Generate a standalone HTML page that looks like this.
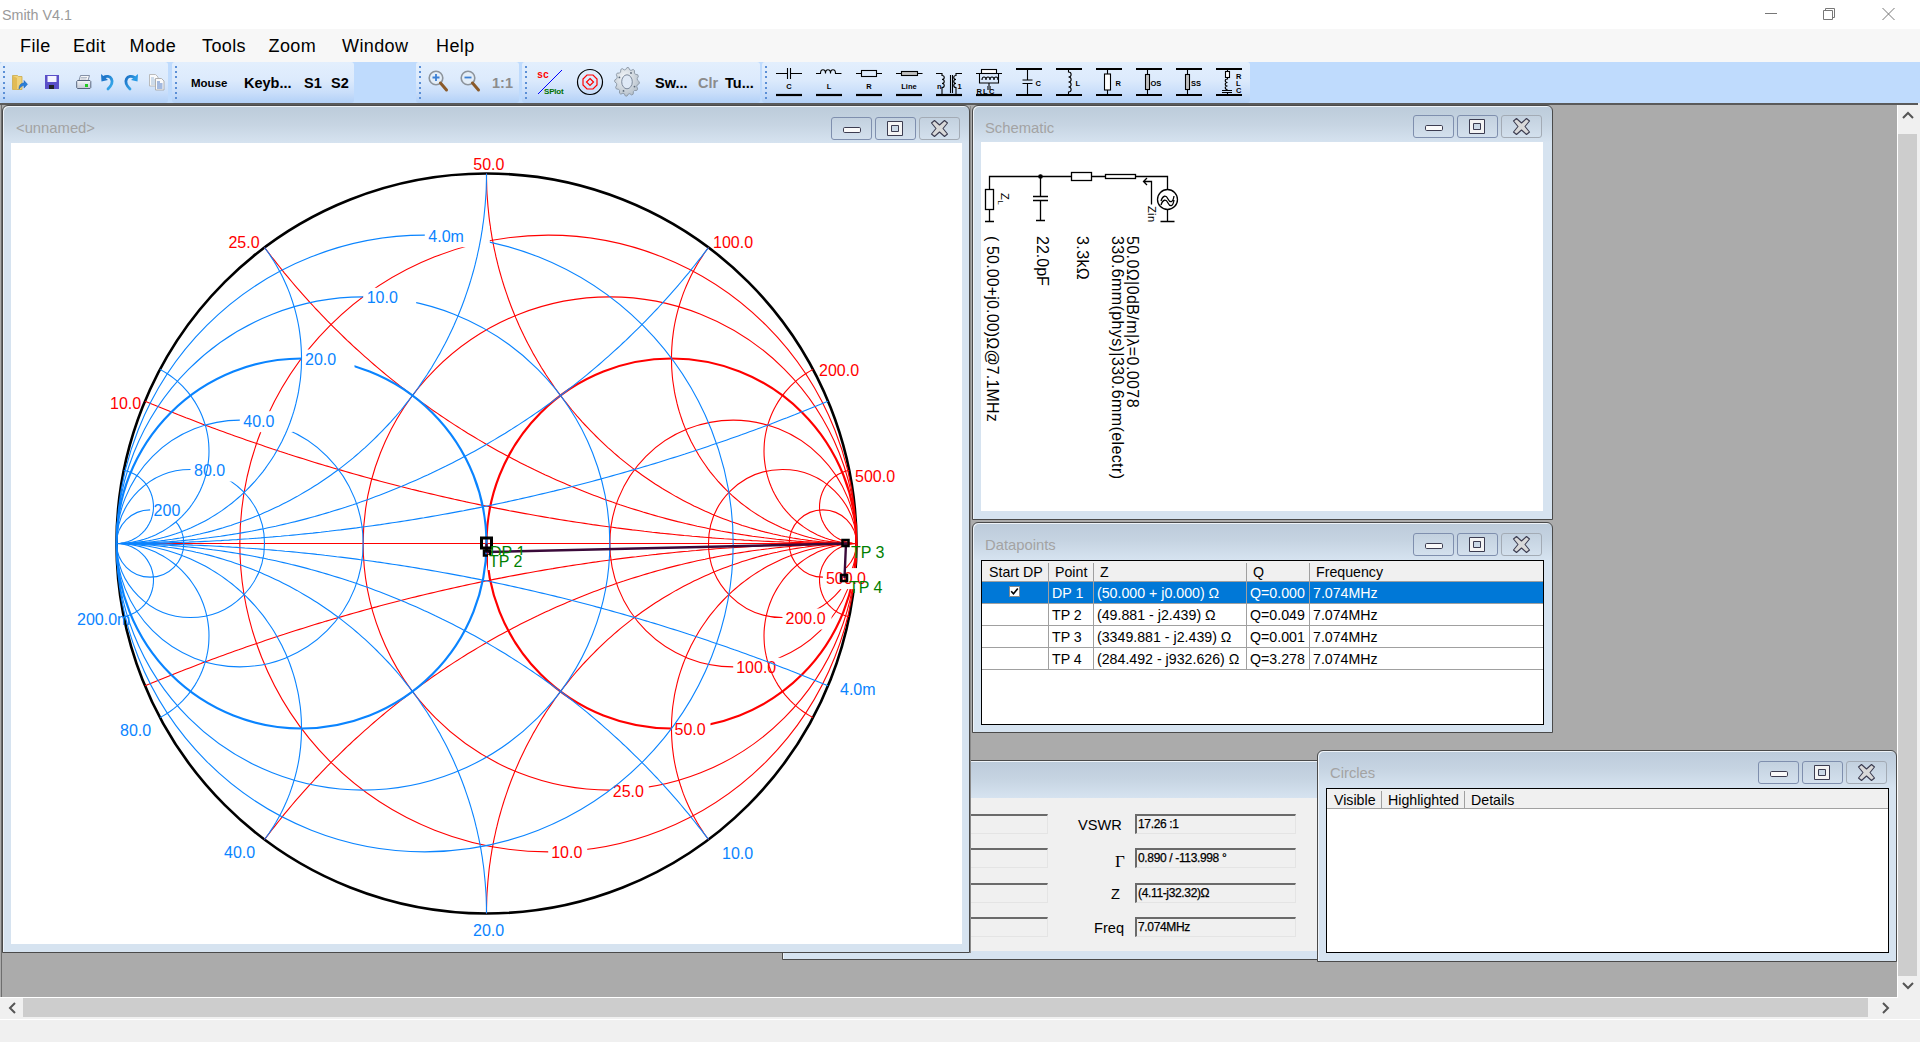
<!DOCTYPE html><html><head><meta charset="utf-8"><style>
*{margin:0;padding:0;box-sizing:border-box}
html,body{width:1920px;height:1042px;overflow:hidden}
body{position:relative;background:#f0f0f0;font-family:"Liberation Sans",sans-serif;color:#000}
.a{position:absolute}
.win{position:absolute;border:1px solid #4a4a4a;border-radius:6px 6px 0 0;background:linear-gradient(#bccbda 0,#c6d4e2 18px,#d6e3f0 37px,#d6e3f0 100%);box-shadow:inset 1px 1px 0 #eef3f8}
.wt{position:absolute;font-size:14.8px;color:#a3a3a3;white-space:nowrap;line-height:16px}
.wb{position:absolute;width:41px;height:23px;border:1px solid #7f8fae;border-radius:3px;background:linear-gradient(#c3d1df,#d3e0ed)}
.wb svg{position:absolute;left:-1px;top:-1px}
.wbc{border-color:#a3abb5}
.mi{position:absolute;top:36px;font-size:18px;line-height:20px;letter-spacing:0.4px}
.tb{position:absolute;top:62px;height:41px;border-radius:3px;background:linear-gradient(#e3effd 0,#dceafc 45%,#c9defa 75%,#b2d0f7 100%)}
.grip{position:absolute;left:3px;top:4px;width:2px;height:33px;background:repeating-linear-gradient(#5b8fd6 0,#5b8fd6 2px,transparent 2px,transparent 5.2px)}
.tt{position:absolute;font-weight:bold;white-space:nowrap}
.cell{position:absolute;font-size:14.2px;white-space:nowrap;line-height:16px}
.inp{position:absolute;width:161px;height:20px;background:#f0f0f0;border-top:2px solid #6a6a6a;border-left:2px solid #6a6a6a;border-right:1px solid #e4e4e4;border-bottom:1px solid #e4e4e4}
.inp span{position:absolute;left:1px;top:1px;font-size:12px;letter-spacing:-0.35px;color:#000;-webkit-text-stroke:0.25px #000}
.lbl{position:absolute;font-size:14.6px;white-space:nowrap}
.rot{position:absolute;transform-origin:0 0;transform:rotate(90deg);font-size:16px;white-space:nowrap;line-height:16px;letter-spacing:0.4px}
</style></head><body>
<div class="a" style="left:0;top:0;width:1920px;height:29px;background:#fff"></div>
<div class="a" style="left:2px;top:6.5px;font-size:14.3px;color:#9a9a9a;line-height:16px">Smith V4.1</div>
<svg class="a" style="left:1750px;top:0" width="170" height="29"><path d="M15,13.5h12" stroke="#777" stroke-width="1"/><path d="M73.5,10.5h9v9h-9z M75.5,10.5v-2h9v9h-2" fill="none" stroke="#777"/><path d="M132.5,8l12,12M144.5,8l-12,12" stroke="#777" stroke-width="1"/></svg>
<div class="a" style="left:0;top:29px;width:1920px;height:33px;background:#f7f7f7"></div>
<div class="mi" style="left:20px">File</div>
<div class="mi" style="left:73px">Edit</div>
<div class="mi" style="left:129.5px">Mode</div>
<div class="mi" style="left:202px">Tools</div>
<div class="mi" style="left:268.5px">Zoom</div>
<div class="mi" style="left:342px">Window</div>
<div class="mi" style="left:436px">Help</div>
<div class="a" style="left:0;top:62px;width:1920px;height:41px;background:#bfdbfd"></div>
<div class="tb" style="left:0px;width:168px"><div class="grip"></div></div>
<div class="tb" style="left:172px;width:182px"><div class="grip"></div></div>
<div class="tb" style="left:416px;width:103px"><div class="grip"></div></div>
<div class="tb" style="left:522px;width:238px"><div class="grip"></div></div>
<div class="tb" style="left:762px;width:488px"><div class="grip"></div></div>
<svg class="a" style="left:0;top:62px" width="1260" height="41" viewBox="0 62 1260 41"><g><path d="M12.5,75.5 h5 l1,1 h3.5 v13 h-9.5z" fill="#f0d27a" stroke="#c9a94a" stroke-width="0.8"/><path d="M13,76 l4,2 v12 l-4,-1z" fill="#e2bb55"/><path d="M19,89 c0,-4 2,-6 5,-6 v-2.5 l3.5,3.8 l-3.5,3.8 v-2.5 c-2,0 -3.5,1.5 -5,3.5z" fill="#2a7fd8" stroke="#1a5fb0" stroke-width="0.5"/><rect x="45" y="75" width="14" height="14" fill="#5a4fc8"/><rect x="47.5" y="76" width="9" height="6" fill="#f4f4ff"/><rect x="49" y="85" width="5" height="4" fill="#222"/><defs><linearGradient id="pb" x1="0" y1="0" x2="0" y2="1"><stop offset="0" stop-color="#f4f6fa"/><stop offset="1" stop-color="#c4cad6"/></linearGradient><linearGradient id="ub" x1="0" y1="0" x2="1" y2="1"><stop offset="0" stop-color="#1b6fc4"/><stop offset="1" stop-color="#38b0f0"/></linearGradient><radialGradient id="gg" cx="0.4" cy="0.35" r="0.8"><stop offset="0" stop-color="#f4f7fa"/><stop offset="1" stop-color="#aab6c2"/></radialGradient></defs><path d="M80.5,75.5 h9 l-1.5,5 h-9z" fill="#f6f7f9" stroke="#6a7790" stroke-width="0.8"/><path d="M81,77.5h6M80.5,79h6" stroke="#8a96aa" stroke-width="0.6"/><path d="M77.5,80.5 h12.5 l0.8,1 v6 l-0.8,1 h-12.5 l-0.8,-1 v-6z" fill="url(#pb)" stroke="#4a5872" stroke-width="0.9"/><rect x="85" y="84" width="3" height="3" fill="#22cc22"/><path d="M108,89 c4,-4 5,-7 3.5,-10 c-1.5,-3 -5,-3.5 -8,-1.5" fill="none" stroke="url(#ub)" stroke-width="2.8" stroke-linecap="round"/><path d="M101,74 l0.5,7.5 l6.5,-1.5z" fill="#1f78cc"/><path d="M130,89 c-4,-4 -5,-7 -3.5,-10 c1.5,-3 5,-3.5 8,-1.5" fill="none" stroke="url(#ub)" stroke-width="2.8" stroke-linecap="round"/><path d="M138,74 l-0.5,7.5 l-6.5,-1.5z" fill="#2a9ae6"/><path d="M149.5,74.5h6l2.5,2.5v9h-8.5z" fill="#fafafa" stroke="#b4b4b4" stroke-width="0.9"/><path d="M151,78h3M151,80h5M151,82h5M151,84h5" stroke="#7aa0cc" stroke-width="0.7"/><path d="M155.5,78.5h6l2.5,2.5v9h-8.5z" fill="#fafafa" stroke="#a8a8a8" stroke-width="0.9"/><path d="M157,82h3M157,84h5.5M157,86h5.5M157,88h5.5" stroke="#3a6cc0" stroke-width="0.9"/></g><circle cx="436" cy="78" r="6.8" fill="#e4eef8" stroke="#8d949c" stroke-width="1.6"/><path d="M440.5,83 l6,7" stroke="#8a5a2a" stroke-width="3" stroke-linecap="round"/><path d="M432.5,77.5h7 M436.0,74v7" stroke="#3b7fd4" stroke-width="1.8"/><circle cx="468" cy="78" r="6.8" fill="#e4eef8" stroke="#8d949c" stroke-width="1.6"/><path d="M472.5,83 l6,7" stroke="#8a5a2a" stroke-width="3" stroke-linecap="round"/><path d="M464.5,77.5h7" stroke="#3b7fd4" stroke-width="1.8"/><text x="537" y="77.5" font-family="Liberation Mono" font-weight="bold" font-size="10" fill="#f00">sc</text><path d="M538,94 L562,70" stroke="#0000ff" stroke-width="1"/><text x="544" y="94" font-family="Liberation Sans" font-weight="bold" font-size="8" fill="#007000" letter-spacing="-0.2">SPlot</text><circle cx="590" cy="82" r="12.5" fill="none" stroke="#000" stroke-width="1.2"/><path d="M587,75 h6 l4,4 v6 l-4,4 h-6 l-4,-4 v-6z" fill="none" stroke="#f00" stroke-width="1.2"/><path d="M590,78.5 l3.5,3.5 l-3.5,3.5 l-3.5,-3.5z" fill="none" stroke="#f00" stroke-width="1.2"/><g transform="translate(627,81.8)"><polygon points="12.30,0.00 12.19,1.87 10.22,3.18 9.77,4.71 10.65,7.15 9.76,8.71 7.48,8.70 6.44,9.76 6.15,12.38 4.71,13.21 2.74,11.88 1.38,12.19 0.00,14.30 -1.61,14.18 -2.74,11.88 -4.05,11.36 -6.15,12.38 -7.49,11.34 -7.48,8.70 -8.39,7.49 -10.65,7.15 -11.36,5.47 -10.22,3.18 -10.49,1.61 -12.30,0.00 -12.19,-1.87 -10.22,-3.18 -9.77,-4.71 -10.65,-7.15 -9.76,-8.71 -7.48,-8.70 -6.44,-9.76 -6.15,-12.38 -4.71,-13.21 -2.74,-11.88 -1.38,-12.19 -0.00,-14.30 1.61,-14.18 2.74,-11.88 4.05,-11.36 6.15,-12.38 7.49,-11.34 7.48,-8.70 8.39,-7.49 10.65,-7.15 11.36,-5.47 10.22,-3.18 10.49,-1.61" fill="url(#gg)" stroke="#8a96a4" stroke-width="0.9" stroke-linejoin="round"/><ellipse rx="5.3" ry="7" fill="#dfe9f6" stroke="#7d8a9c" stroke-width="1"/><circle cx="7.5" cy="4.8" r="0.9" fill="#5a6878"/><circle cx="-3.5" cy="9.1" r="0.9" fill="#5a6878"/><circle cx="-7.6" cy="-4.4" r="0.9" fill="#5a6878"/><circle cx="4.0" cy="-8.8" r="0.9" fill="#5a6878"/></g><path d="M776,73.5h11M791,73.5h11M787.5,68v11M790.5,68v11" stroke="#000" stroke-width="1.1" fill="none"/><path d="M776,95h26" stroke="#000" stroke-width="2.2"/><text x="789" y="89" font-family="Liberation Sans" font-size="7.5" font-weight="bold" fill="#000" text-anchor="middle">C</text><path d="M816,73.5h4.5c0,-5 5,-5 5,0c0,-5 5,-5 5,0c0,-5 5,-5 5,0h6" stroke="#000" stroke-width="1.1" fill="none"/><path d="M816,95h26" stroke="#000" stroke-width="2.2"/><text x="829" y="89" font-family="Liberation Sans" font-size="7.5" font-weight="bold" fill="#000" text-anchor="middle">L</text><path d="M856,73.5h5.5M876.5,73.5h5.5" stroke="#000" stroke-width="1.1" fill="none"/><rect x="861.5" y="70.5" width="15" height="6" stroke="#000" stroke-width="1.1" fill="none"/><path d="M856,95h26" stroke="#000" stroke-width="2.2"/><text x="869" y="89" font-family="Liberation Sans" font-size="7.5" font-weight="bold" fill="#000" text-anchor="middle">R</text><path d="M896,73.5h5.5M917.5,73.5h5" stroke="#000" stroke-width="1.1" fill="none"/><rect x="901.5" y="71.5" width="16" height="4" fill="#c0c0c0" stroke="#000" stroke-width="1.1"/><path d="M896,95h26" stroke="#000" stroke-width="2.2"/><text x="909" y="89" font-family="Liberation Sans" font-size="7.5" font-weight="bold" fill="#000" text-anchor="middle">Line</text><path d="M936,73.5h6v2c3,0 3,4 0,4c3,0 3,4 0,4c3,0 3,4 0,4v8M962,73.5h-6v2c-3,0 -3,4 0,4c-3,0 -3,4 0,4c-3,0 -3,4 0,4v8M950.5,75v18M952.5,75v18" stroke="#000" stroke-width="1.1" fill="none"/><path d="M936,95h26" stroke="#000" stroke-width="2.2"/><text x="937" y="89" font-family="Liberation Sans" font-size="7.5" font-weight="bold" fill="#000">n</text><text x="957.5" y="89" font-family="Liberation Sans" font-size="7.5" font-weight="bold" fill="#000">1</text><path d="M976,73.5h26M979.5,73.5v9.5h19v-9.5M982,80c0,-4 4,-4 4,0c0,-4 4,-4 4,0c0,-4 4,-4 4,0c0,-4 4,-4 4,0M989,83v3M988,86v4M990,86v4" stroke="#000" stroke-width="1.1" fill="none"/><rect x="981.5" y="69.5" width="15" height="4" fill="#fff" stroke="#000" stroke-width="1.1"/><path d="M976,95h26" stroke="#000" stroke-width="2.2"/><text x="976.5" y="94" font-family="Liberation Sans" font-size="7.5" font-weight="bold" fill="#000" letter-spacing="1.2">RLC</text><path d="M1016,69h26M1016,95h26" stroke="#000" stroke-width="2.2"/><path d="M1027.5,69v11M1027.5,83.5v11.5M1022.5,80h10M1022.5,83.5h10" stroke="#000" stroke-width="1.1" fill="none"/><text x="1035.5" y="85.5" font-family="Liberation Sans" font-size="7.5" font-weight="bold" fill="#000">C</text><path d="M1056,69h26M1056,95h26" stroke="#000" stroke-width="2.2"/><path d="M1068.5,69v3c3.5,0 3.5,5 0,5c3.5,0 3.5,5 0,5c3.5,0 3.5,5 0,5c3.5,0 3.5,5 0,5v3" stroke="#000" stroke-width="1.1" fill="none"/><text x="1075.5" y="85.5" font-family="Liberation Sans" font-size="7.5" font-weight="bold" fill="#000">L</text><path d="M1096,69h26M1096,95h26" stroke="#000" stroke-width="2.2"/><path d="M1107.5,69v5M1107.5,90v5" stroke="#000" stroke-width="1.1" fill="none"/><rect x="1104.5" y="74" width="6" height="16" fill="#fff" stroke="#000" stroke-width="1.1"/><text x="1115.5" y="86" font-family="Liberation Sans" font-size="7.5" font-weight="bold" fill="#000">R</text><path d="M1136,69h26M1136,95h26" stroke="#000" stroke-width="2.2"/><path d="M1147.5,69v5.5M1147.5,89.5v5.5" stroke="#000" stroke-width="1.1" fill="none"/><rect x="1145.5" y="74.5" width="4" height="15" fill="#c0c0c0" stroke="#000" stroke-width="1.1"/><text x="1150.5" y="86" font-family="Liberation Sans" font-size="7.5" font-weight="bold" fill="#000">OS</text><path d="M1176,69h26M1176,95h26" stroke="#000" stroke-width="2.2"/><path d="M1187.5,69v5.5M1187.5,89.5v5.5" stroke="#000" stroke-width="1.1" fill="none"/><rect x="1185.5" y="74.5" width="4" height="15" fill="#c0c0c0" stroke="#000" stroke-width="1.1"/><text x="1191" y="86" font-family="Liberation Sans" font-size="7.5" font-weight="bold" fill="#000">SS</text><path d="M1216,69h26M1216,95h26" stroke="#000" stroke-width="2.2"/><path d="M1227.5,69v2.5M1227.5,77.5v1.5c-3,0 -3,3.5 0,3.5c-3,0 -3,3.5 0,3.5c-3,0 -3,3.5 0,3.5M1222,90.5h10M1222,92.5h10M1227.5,92.5v2.5" stroke="#000" stroke-width="1.1" fill="none"/><rect x="1225.5" y="71.5" width="4" height="6" fill="#fff" stroke="#000" stroke-width="1.1"/><text x="1236" y="78.5" font-family="Liberation Sans" font-size="7.5" font-weight="bold" fill="#000">R</text><text x="1236" y="85.5" font-family="Liberation Sans" font-size="7.5" font-weight="bold" fill="#000">L</text><text x="1236" y="92.5" font-family="Liberation Sans" font-size="7.5" font-weight="bold" fill="#000">C</text></svg><div class="tt" style="left:191px;top:77px;font-size:11.5px">Mouse</div><div class="tt" style="left:244px;top:75px;font-size:14.5px">Keyb...</div><div class="tt" style="left:304px;top:75px;font-size:14.5px">S1</div><div class="tt" style="left:331px;top:75px;font-size:14.5px">S2</div><div class="tt" style="left:492px;top:75px;font-size:14.5px;color:#8c8c8c">1:1</div><div class="tt" style="left:655px;top:75px;font-size:14.5px">Sw...</div><div class="tt" style="left:698px;top:75px;font-size:14.5px;color:#8c8c8c">Clr</div><div class="tt" style="left:725px;top:75px;font-size:14.5px">Tu...</div>
<div class="a" style="left:0;top:103px;width:1918px;height:2px;background:#5a5a5a"></div>
<div class="a" style="left:0;top:105px;width:1898px;height:892px;background:#ababab"></div><div class="a" style="left:1px;top:105px;width:1px;height:892px;background:#6e6e6e"></div>
<div class="a" style="left:1897px;top:105px;width:23px;height:914px;background:#f0f0f0;border-left:1px solid #fff"></div>
<div class="a" style="left:1898px;top:134px;width:19px;height:842px;background:#cdcdcd"></div>
<svg class="a" style="left:1898px;top:105px" width="20" height="20"><path d="M5,13 L10,8 L15,13" fill="none" stroke="#555" stroke-width="2"/></svg>
<svg class="a" style="left:1898px;top:976px" width="20" height="20"><path d="M5,7 L10,12 L15,7" fill="none" stroke="#555" stroke-width="2"/></svg>
<div class="a" style="left:0;top:997px;width:1898px;height:22px;background:#f0f0f0;border-top:1px solid #fff"></div>
<div class="a" style="left:23px;top:998px;width:1845px;height:19px;background:#cdcdcd"></div>
<svg class="a" style="left:2px;top:998px" width="20" height="20"><path d="M13,5 L8,10 L13,15" fill="none" stroke="#555" stroke-width="2"/></svg>
<svg class="a" style="left:1876px;top:998px" width="20" height="20"><path d="M7,5 L12,10 L7,15" fill="none" stroke="#555" stroke-width="2"/></svg>
<div class="a" style="left:0;top:1019px;width:1920px;height:1px;background:#fff"></div>
<div class="win" style="left:782px;top:760px;width:778px;height:200px"><div class="wt" style="left:12px;top:14px"></div></div><div class="wb" style="left:1421px;top:771px"><svg width="41" height="23"><rect x="12.5" y="10.5" width="17" height="5" rx="1.2" fill="#fafafa" stroke="#3c3c50" stroke-width="1"/></svg></div><div class="wb" style="left:1465px;top:771px"><svg width="41" height="23"><path d="M12.5,4.5h15v14h-15z M16.5,8.5v6h7v-6z" fill="#f4f4f4" fill-rule="evenodd" stroke="#3c3c50" stroke-width="1"/></svg></div><div class="wb wbc" style="left:1509px;top:771px"><svg width="41" height="23"><path d="M12.5,6 L15.5,3.5 L20.5,8 L25.5,3.5 L28.5,6 L24,11.5 L28.5,17 L25.5,19.5 L20.5,15 L15.5,19.5 L12.5,17 L17,11.5 Z" fill="#d9d9d9" stroke="#3c3c50" stroke-width="1.1" stroke-linejoin="round"/></svg></div><div class="a" style="left:783px;top:798px;width:760px;height:153px;background:#f0f0f0"></div><div class="inp" style="left:887px;top:814px;width:161px"></div><div class="inp" style="left:1135px;top:814px"><span>17.26 :1</span></div><div class="inp" style="left:887px;top:848px;width:161px"></div><div class="inp" style="left:1135px;top:848px"><span>0.890 / -113.998 &deg;</span></div><div class="inp" style="left:887px;top:883px;width:161px"></div><div class="inp" style="left:1135px;top:883px"><span>(4.11-j32.32)&Omega;</span></div><div class="inp" style="left:887px;top:917px;width:161px"></div><div class="inp" style="left:1135px;top:917px"><span>7.074MHz</span></div><div class="lbl" style="left:1078px;top:817px">VSWR</div><div class="lbl" style="left:1115px;top:852px;font-family:'Liberation Serif';font-size:17px">&Gamma;</div><div class="lbl" style="left:1111px;top:886px">Z</div><div class="lbl" style="left:1094px;top:920px">Freq</div>
<div class="win" style="left:1317px;top:750px;width:580px;height:212px"><div class="wt" style="left:12px;top:14px">Circles</div></div><div class="wb" style="left:1758px;top:761px"><svg width="41" height="23"><rect x="12.5" y="10.5" width="17" height="5" rx="1.2" fill="#fafafa" stroke="#3c3c50" stroke-width="1"/></svg></div><div class="wb" style="left:1802px;top:761px"><svg width="41" height="23"><path d="M12.5,4.5h15v14h-15z M16.5,8.5v6h7v-6z" fill="#f4f4f4" fill-rule="evenodd" stroke="#3c3c50" stroke-width="1"/></svg></div><div class="wb wbc" style="left:1846px;top:761px"><svg width="41" height="23"><path d="M12.5,6 L15.5,3.5 L20.5,8 L25.5,3.5 L28.5,6 L24,11.5 L28.5,17 L25.5,19.5 L20.5,15 L15.5,19.5 L12.5,17 L17,11.5 Z" fill="#d9d9d9" stroke="#3c3c50" stroke-width="1.1" stroke-linejoin="round"/></svg></div><div class="a" style="left:1326px;top:788px;width:563px;height:165px;background:#fff;border:1px solid #000"></div><div class="a" style="left:1327px;top:789px;width:561px;height:20px;background:#f0f0f0;border-bottom:1px solid #a0a0a0"></div><div class="a" style="left:1381px;top:791px;width:1px;height:17px;background:#a0a0a0"></div><div class="a" style="left:1464px;top:791px;width:1px;height:17px;background:#a0a0a0"></div><div class="cell" style="left:1334px;top:792px">Visible</div><div class="cell" style="left:1388px;top:792px">Highlighted</div><div class="cell" style="left:1471px;top:792px">Details</div>
<div class="win" style="left:2px;top:105px;width:968px;height:848px"><div class="wt" style="left:13px;top:14px">&lt;unnamed&gt;</div></div><div class="wb" style="left:831px;top:117px"><svg width="41" height="23"><rect x="12.5" y="10.5" width="17" height="5" rx="1.2" fill="#fafafa" stroke="#3c3c50" stroke-width="1"/></svg></div><div class="wb" style="left:875px;top:117px"><svg width="41" height="23"><path d="M12.5,4.5h15v14h-15z M16.5,8.5v6h7v-6z" fill="#f4f4f4" fill-rule="evenodd" stroke="#3c3c50" stroke-width="1"/></svg></div><div class="wb wbc" style="left:919px;top:117px"><svg width="41" height="23"><path d="M12.5,6 L15.5,3.5 L20.5,8 L25.5,3.5 L28.5,6 L24,11.5 L28.5,17 L25.5,19.5 L20.5,15 L15.5,19.5 L12.5,17 L17,11.5 Z" fill="#d9d9d9" stroke="#3c3c50" stroke-width="1.1" stroke-linejoin="round"/></svg></div><div class="a" style="left:11px;top:143px;width:951px;height:801px;background:#fff"></div><svg class="a" style="left:0;top:0" width="970" height="953" viewBox="0 0 970 953">
<g fill="none">
<circle cx="486.5" cy="543.5" r="370.0" stroke="#000" stroke-width="2.6"/>
<g stroke="#ff0000" stroke-width="1.1">
<circle cx="548.17" cy="543.50" r="308.33"/>
<circle cx="609.83" cy="543.50" r="246.67"/>
<circle cx="671.50" cy="543.50" r="185.00" stroke-width="2.2"/>
<circle cx="733.17" cy="543.50" r="123.33"/>
<circle cx="782.50" cy="543.50" r="74.00"/>
<circle cx="822.86" cy="543.50" r="33.64"/>
</g>
</g>
<g font-family="Liberation Sans" font-size="16">
<rect x="548.2" y="842.8" width="39.0" height="21.0" fill="#fff"/>
<text x="551.2" y="858.3" fill="#ff0000" text-anchor="start">10.0</text>
<rect x="609.8" y="781.2" width="39.0" height="21.0" fill="#fff"/>
<text x="612.8" y="796.7" fill="#ff0000" text-anchor="start">25.0</text>
<rect x="671.5" y="719.5" width="39.0" height="21.0" fill="#fff"/>
<text x="674.5" y="735.0" fill="#ff0000" text-anchor="start">50.0</text>
<rect x="733.2" y="657.8" width="49.0" height="21.0" fill="#fff"/>
<text x="736.2" y="673.3" fill="#ff0000" text-anchor="start">100.0</text>
<rect x="782.5" y="608.5" width="49.0" height="21.0" fill="#fff"/>
<text x="785.5" y="624.0" fill="#ff0000" text-anchor="start">200.0</text>
<rect x="822.9" y="568.1" width="49.0" height="21.0" fill="#fff"/>
<text x="825.9" y="583.6" fill="#ff0000" text-anchor="start">500.0</text>
<text x="473.3" y="170.2" fill="#ff0000" text-anchor="start">50.0</text>
<text x="228.4" y="248.2" fill="#ff0000" text-anchor="start">25.0</text>
<text x="713.0" y="248.0" fill="#ff0000" text-anchor="start">100.0</text>
<text x="110.0" y="408.5" fill="#ff0000" text-anchor="start">10.0</text>
<text x="819.0" y="376.0" fill="#ff0000" text-anchor="start">200.0</text>
<text x="855.0" y="482.0" fill="#ff0000" text-anchor="start">500.0</text>
</g>
<g fill="none" stroke="#ff0000" stroke-width="1.1">
<path d="M116.5,543.5H856.5"/>
<path d="M856.5,543.5 852.5,543.5 848.5,543.5 844.5,543.5 840.4,543.4 836.4,543.4 832.4,543.3 828.4,543.3 824.4,543.2 820.4,543.1 816.4,543.1 812.4,543.0 808.3,542.9 804.3,542.8 800.3,542.6 796.3,542.5 792.3,542.4 788.3,542.2 784.3,542.1 780.3,541.9 776.3,541.8 772.3,541.6 768.2,541.4 764.2,541.2 760.2,541.0 756.2,540.8 752.2,540.6 748.2,540.3 744.2,540.1 740.2,539.8 736.2,539.6 732.2,539.3 728.2,539.0 724.2,538.8 720.2,538.5 716.2,538.2 712.2,537.9 708.2,537.5 704.2,537.2 700.2,536.9 696.2,536.5 692.2,536.2 688.2,535.8 684.2,535.5 680.2,535.1 676.2,534.7 672.2,534.3 668.2,533.9 664.2,533.5 660.2,533.1 656.2,532.6 652.3,532.2 648.3,531.7 644.3,531.3 640.3,530.8 636.3,530.3 632.3,529.9 628.3,529.4 624.4,528.9 620.4,528.4 616.4,527.9 612.4,527.3 608.4,526.8 604.5,526.3 600.5,525.7 596.5,525.1 592.5,524.6 588.6,524.0 584.6,523.4 580.6,522.8 576.7,522.2 572.7,521.6 568.7,521.0 564.8,520.4 560.8,519.7 556.9,519.1 552.9,518.4 548.9,517.8 545.0,517.1 541.0,516.4 537.1,515.7 533.1,515.0 529.2,514.3 525.2,513.6 521.3,512.9 517.3,512.1 513.4,511.4 509.4,510.7 505.5,509.9 501.6,509.1 497.6,508.4 493.7,507.6 489.8,506.8 485.8,506.0 481.9,505.2 478.0,504.4 474.0,503.5 470.1,502.7 466.2,501.9 462.3,501.0 458.3,500.1 454.4,499.3 450.5,498.4 446.6,497.5 442.7,496.6 438.8,495.7 434.9,494.8 431.0,493.9 427.1,493.0 423.1,492.0 419.2,491.1 415.4,490.1 411.5,489.2 407.6,488.2 403.7,487.2 399.8,486.2 395.9,485.2 392.0,484.2 388.1,483.2 384.2,482.2 380.4,481.2 376.5,480.1 372.6,479.1 368.7,478.0 364.9,477.0 361.0,475.9 357.1,474.8 353.3,473.7 349.4,472.6 345.6,471.5 341.7,470.4 337.8,469.3 334.0,468.2 330.1,467.0 326.3,465.9 322.5,464.7 318.6,463.6 314.8,462.4 310.9,461.2 307.1,460.0 303.3,458.8 299.4,457.6 295.6,456.4 291.8,455.2 288.0,454.0 284.2,452.7 280.3,451.5 276.5,450.2 272.7,449.0 268.9,447.7 265.1,446.4 261.3,445.1 257.5,443.8 253.7,442.5 249.9,441.2 246.1,439.9 242.4,438.6 238.6,437.2 234.8,435.9 231.0,434.6 227.2,433.2 223.5,431.8 219.7,430.4 215.9,429.1 212.2,427.7 208.4,426.3 204.6,424.9 200.9,423.4 197.1,422.0 193.4,420.6 189.6,419.1 185.9,417.7 182.2,416.2 178.4,414.8 174.7,413.3 171.0,411.8 167.2,410.3 163.5,408.8 159.8,407.3 156.1,405.8 152.4,404.3 148.7,402.7 145.0,401.2"/>
<path d="M856.5,543.5 852.5,543.5 848.5,543.5 844.5,543.5 840.4,543.6 836.4,543.6 832.4,543.7 828.4,543.7 824.4,543.8 820.4,543.9 816.4,543.9 812.4,544.0 808.3,544.1 804.3,544.2 800.3,544.4 796.3,544.5 792.3,544.6 788.3,544.8 784.3,544.9 780.3,545.1 776.3,545.2 772.3,545.4 768.2,545.6 764.2,545.8 760.2,546.0 756.2,546.2 752.2,546.4 748.2,546.7 744.2,546.9 740.2,547.2 736.2,547.4 732.2,547.7 728.2,548.0 724.2,548.2 720.2,548.5 716.2,548.8 712.2,549.1 708.2,549.5 704.2,549.8 700.2,550.1 696.2,550.5 692.2,550.8 688.2,551.2 684.2,551.5 680.2,551.9 676.2,552.3 672.2,552.7 668.2,553.1 664.2,553.5 660.2,553.9 656.2,554.4 652.3,554.8 648.3,555.3 644.3,555.7 640.3,556.2 636.3,556.7 632.3,557.1 628.3,557.6 624.4,558.1 620.4,558.6 616.4,559.1 612.4,559.7 608.4,560.2 604.5,560.7 600.5,561.3 596.5,561.9 592.5,562.4 588.6,563.0 584.6,563.6 580.6,564.2 576.7,564.8 572.7,565.4 568.7,566.0 564.8,566.6 560.8,567.3 556.9,567.9 552.9,568.6 548.9,569.2 545.0,569.9 541.0,570.6 537.1,571.3 533.1,572.0 529.2,572.7 525.2,573.4 521.3,574.1 517.3,574.9 513.4,575.6 509.4,576.3 505.5,577.1 501.6,577.9 497.6,578.6 493.7,579.4 489.8,580.2 485.8,581.0 481.9,581.8 478.0,582.6 474.0,583.5 470.1,584.3 466.2,585.1 462.3,586.0 458.3,586.9 454.4,587.7 450.5,588.6 446.6,589.5 442.7,590.4 438.8,591.3 434.9,592.2 431.0,593.1 427.1,594.0 423.1,595.0 419.2,595.9 415.4,596.9 411.5,597.8 407.6,598.8 403.7,599.8 399.8,600.8 395.9,601.8 392.0,602.8 388.1,603.8 384.2,604.8 380.4,605.8 376.5,606.9 372.6,607.9 368.7,609.0 364.9,610.0 361.0,611.1 357.1,612.2 353.3,613.3 349.4,614.4 345.6,615.5 341.7,616.6 337.8,617.7 334.0,618.8 330.1,620.0 326.3,621.1 322.5,622.3 318.6,623.4 314.8,624.6 310.9,625.8 307.1,627.0 303.3,628.2 299.4,629.4 295.6,630.6 291.8,631.8 288.0,633.0 284.2,634.3 280.3,635.5 276.5,636.8 272.7,638.0 268.9,639.3 265.1,640.6 261.3,641.9 257.5,643.2 253.7,644.5 249.9,645.8 246.1,647.1 242.4,648.4 238.6,649.8 234.8,651.1 231.0,652.4 227.2,653.8 223.5,655.2 219.7,656.6 215.9,657.9 212.2,659.3 208.4,660.7 204.6,662.1 200.9,663.6 197.1,665.0 193.4,666.4 189.6,667.9 185.9,669.3 182.2,670.8 178.4,672.2 174.7,673.7 171.0,675.2 167.2,676.7 163.5,678.2 159.8,679.7 156.1,681.2 152.4,682.7 148.7,684.3 145.0,685.8"/>
<path d="M856.5,543.5 852.5,543.5 848.5,543.5 844.5,543.4 840.4,543.3 836.4,543.2 832.4,543.1 828.4,543.0 824.4,542.8 820.4,542.6 816.4,542.4 812.4,542.2 808.4,541.9 804.4,541.7 800.4,541.4 796.4,541.1 792.4,540.7 788.4,540.4 784.4,540.0 780.4,539.6 776.4,539.2 772.4,538.7 768.4,538.2 764.4,537.8 760.5,537.2 756.5,536.7 752.5,536.2 748.5,535.6 744.6,535.0 740.6,534.4 736.6,533.7 732.7,533.1 728.7,532.4 724.8,531.7 720.8,531.0 716.9,530.2 713.0,529.4 709.0,528.7 705.1,527.8 701.2,527.0 697.2,526.2 693.3,525.3 689.4,524.4 685.5,523.5 681.6,522.5 677.7,521.6 673.8,520.6 669.9,519.6 666.1,518.6 662.2,517.5 658.3,516.5 654.4,515.4 650.6,514.3 646.7,513.1 642.9,512.0 639.1,510.8 635.2,509.6 631.4,508.4 627.6,507.2 623.8,505.9 620.0,504.7 616.2,503.4 612.4,502.1 608.6,500.7 604.8,499.4 601.0,498.0 597.3,496.6 593.5,495.2 589.8,493.8 586.0,492.3 582.3,490.8 578.6,489.3 574.9,487.8 571.2,486.3 567.5,484.7 563.8,483.1 560.1,481.5 556.4,479.9 552.7,478.3 549.1,476.6 545.4,475.0 541.8,473.3 538.2,471.5 534.6,469.8 531.0,468.0 527.4,466.3 523.8,464.5 520.2,462.7 516.6,460.8 513.1,459.0 509.5,457.1 506.0,455.2 502.4,453.3 498.9,451.4 495.4,449.4 491.9,447.5 488.4,445.5 485.0,443.5 481.5,441.4 478.0,439.4 474.6,437.3 471.2,435.3 467.7,433.2 464.3,431.0 460.9,428.9 457.6,426.7 454.2,424.6 450.8,422.4 447.5,420.2 444.1,417.9 440.8,415.7 437.5,413.4 434.2,411.2 430.9,408.9 427.6,406.5 424.4,404.2 421.1,401.9 417.9,399.5 414.6,397.1 411.4,394.7 408.2,392.3 405.0,389.8 401.9,387.4 398.7,384.9 395.6,382.4 392.4,379.9 389.3,377.4 386.2,374.8 383.1,372.3 380.0,369.7 377.0,367.1 373.9,364.5 370.9,361.9 367.9,359.2 364.9,356.6 361.9,353.9 358.9,351.2 355.9,348.5 353.0,345.8 350.1,343.0 347.1,340.3 344.2,337.5 341.3,334.7 338.5,331.9 335.6,329.1 332.8,326.3 329.9,323.4 327.1,320.6 324.3,317.7 321.6,314.8 318.8,311.9 316.0,309.0 313.3,306.0 310.6,303.1 307.9,300.1 305.2,297.1 302.5,294.1 299.9,291.1 297.2,288.1 294.6,285.1 292.0,282.0 289.4,278.9 286.9,275.9 284.3,272.8 281.8,269.6 279.3,266.5 276.8,263.4 274.3,260.2 271.8,257.1 269.4,253.9 266.9,250.7 264.5,247.5"/>
<path d="M856.5,543.5 852.5,543.5 848.5,543.5 844.5,543.6 840.4,543.7 836.4,543.8 832.4,543.9 828.4,544.0 824.4,544.2 820.4,544.4 816.4,544.6 812.4,544.8 808.4,545.1 804.4,545.3 800.4,545.6 796.4,545.9 792.4,546.3 788.4,546.6 784.4,547.0 780.4,547.4 776.4,547.8 772.4,548.3 768.4,548.8 764.4,549.2 760.5,549.8 756.5,550.3 752.5,550.8 748.5,551.4 744.6,552.0 740.6,552.6 736.6,553.3 732.7,553.9 728.7,554.6 724.8,555.3 720.8,556.0 716.9,556.8 713.0,557.6 709.0,558.3 705.1,559.2 701.2,560.0 697.2,560.8 693.3,561.7 689.4,562.6 685.5,563.5 681.6,564.5 677.7,565.4 673.8,566.4 669.9,567.4 666.1,568.4 662.2,569.5 658.3,570.5 654.4,571.6 650.6,572.7 646.7,573.9 642.9,575.0 639.1,576.2 635.2,577.4 631.4,578.6 627.6,579.8 623.8,581.1 620.0,582.3 616.2,583.6 612.4,584.9 608.6,586.3 604.8,587.6 601.0,589.0 597.3,590.4 593.5,591.8 589.8,593.2 586.0,594.7 582.3,596.2 578.6,597.7 574.9,599.2 571.2,600.7 567.5,602.3 563.8,603.9 560.1,605.5 556.4,607.1 552.7,608.7 549.1,610.4 545.4,612.0 541.8,613.7 538.2,615.5 534.6,617.2 531.0,619.0 527.4,620.7 523.8,622.5 520.2,624.3 516.6,626.2 513.1,628.0 509.5,629.9 506.0,631.8 502.4,633.7 498.9,635.6 495.4,637.6 491.9,639.5 488.4,641.5 485.0,643.5 481.5,645.6 478.0,647.6 474.6,649.7 471.2,651.7 467.7,653.8 464.3,656.0 460.9,658.1 457.6,660.3 454.2,662.4 450.8,664.6 447.5,666.8 444.1,669.1 440.8,671.3 437.5,673.6 434.2,675.8 430.9,678.1 427.6,680.5 424.4,682.8 421.1,685.1 417.9,687.5 414.6,689.9 411.4,692.3 408.2,694.7 405.0,697.2 401.9,699.6 398.7,702.1 395.6,704.6 392.4,707.1 389.3,709.6 386.2,712.2 383.1,714.7 380.0,717.3 377.0,719.9 373.9,722.5 370.9,725.1 367.9,727.8 364.9,730.4 361.9,733.1 358.9,735.8 355.9,738.5 353.0,741.2 350.1,744.0 347.1,746.7 344.2,749.5 341.3,752.3 338.5,755.1 335.6,757.9 332.8,760.7 329.9,763.6 327.1,766.4 324.3,769.3 321.6,772.2 318.8,775.1 316.0,778.0 313.3,781.0 310.6,783.9 307.9,786.9 305.2,789.9 302.5,792.9 299.9,795.9 297.2,798.9 294.6,801.9 292.0,805.0 289.4,808.1 286.9,811.1 284.3,814.2 281.8,817.4 279.3,820.5 276.8,823.6 274.3,826.8 271.8,829.9 269.4,833.1 266.9,836.3 264.5,839.5"/>
<path d="M856.5,543.5 852.5,543.5 848.5,543.4 844.5,543.3 840.5,543.2 836.5,543.0 832.5,542.7 828.5,542.4 824.5,542.1 820.5,541.7 816.5,541.3 812.5,540.9 808.5,540.4 804.6,539.8 800.6,539.3 796.6,538.6 792.7,538.0 788.7,537.2 784.8,536.5 780.9,535.7 777.0,534.8 773.1,534.0 769.2,533.0 765.3,532.1 761.4,531.1 757.5,530.0 753.7,528.9 749.8,527.8 746.0,526.6 742.2,525.4 738.4,524.1 734.6,522.8 730.8,521.5 727.0,520.1 723.3,518.7 719.5,517.2 715.8,515.7 712.1,514.2 708.5,512.6 704.8,511.0 701.1,509.3 697.5,507.6 693.9,505.9 690.3,504.1 686.7,502.3 683.2,500.4 679.7,498.5 676.1,496.6 672.7,494.6 669.2,492.6 665.7,490.5 662.3,488.5 658.9,486.3 655.5,484.2 652.2,482.0 648.9,479.7 645.6,477.5 642.3,475.2 639.0,472.8 635.8,470.5 632.6,468.1 629.4,465.6 626.3,463.1 623.1,460.6 620.0,458.1 617.0,455.5 613.9,452.9 610.9,450.2 607.9,447.6 605.0,444.9 602.1,442.1 599.2,439.3 596.3,436.5 593.5,433.7 590.7,430.8 587.9,427.9 585.1,425.0 582.4,422.1 579.8,419.1 577.1,416.1 574.5,413.0 571.9,410.0 569.4,406.9 566.9,403.7 564.4,400.6 561.9,397.4 559.5,394.2 557.2,391.0 554.8,387.7 552.5,384.4 550.3,381.1 548.0,377.8 545.8,374.5 543.7,371.1 541.5,367.7 539.5,364.3 537.4,360.8 535.4,357.3 533.4,353.9 531.5,350.3 529.6,346.8 527.7,343.3 525.9,339.7 524.1,336.1 522.4,332.5 520.7,328.9 519.0,325.2 517.4,321.5 515.8,317.9 514.3,314.2 512.8,310.5 511.3,306.7 509.9,303.0 508.5,299.2 507.2,295.4 505.9,291.6 504.6,287.8 503.4,284.0 502.2,280.2 501.1,276.3 500.0,272.5 498.9,268.6 497.9,264.7 497.0,260.8 496.0,256.9 495.2,253.0 494.3,249.1 493.5,245.2 492.8,241.3 492.0,237.3 491.4,233.4 490.7,229.4 490.2,225.4 489.6,221.5 489.1,217.5 488.7,213.5 488.3,209.5 487.9,205.5 487.6,201.5 487.3,197.5 487.0,193.5 486.8,189.5 486.7,185.5 486.6,181.5 486.5,177.5 486.5,173.5"/>
<path d="M856.5,543.5 852.5,543.5 848.5,543.6 844.5,543.7 840.5,543.8 836.5,544.0 832.5,544.3 828.5,544.6 824.5,544.9 820.5,545.3 816.5,545.7 812.5,546.1 808.5,546.6 804.6,547.2 800.6,547.7 796.6,548.4 792.7,549.0 788.7,549.8 784.8,550.5 780.9,551.3 777.0,552.2 773.1,553.0 769.2,554.0 765.3,554.9 761.4,555.9 757.5,557.0 753.7,558.1 749.8,559.2 746.0,560.4 742.2,561.6 738.4,562.9 734.6,564.2 730.8,565.5 727.0,566.9 723.3,568.3 719.5,569.8 715.8,571.3 712.1,572.8 708.5,574.4 704.8,576.0 701.1,577.7 697.5,579.4 693.9,581.1 690.3,582.9 686.7,584.7 683.2,586.6 679.7,588.5 676.1,590.4 672.7,592.4 669.2,594.4 665.7,596.5 662.3,598.5 658.9,600.7 655.5,602.8 652.2,605.0 648.9,607.3 645.6,609.5 642.3,611.8 639.0,614.2 635.8,616.5 632.6,618.9 629.4,621.4 626.3,623.9 623.1,626.4 620.0,628.9 617.0,631.5 613.9,634.1 610.9,636.8 607.9,639.4 605.0,642.1 602.1,644.9 599.2,647.7 596.3,650.5 593.5,653.3 590.7,656.2 587.9,659.1 585.1,662.0 582.4,664.9 579.8,667.9 577.1,670.9 574.5,674.0 571.9,677.0 569.4,680.1 566.9,683.3 564.4,686.4 561.9,689.6 559.5,692.8 557.2,696.0 554.8,699.3 552.5,702.6 550.3,705.9 548.0,709.2 545.8,712.5 543.7,715.9 541.5,719.3 539.5,722.7 537.4,726.2 535.4,729.7 533.4,733.1 531.5,736.7 529.6,740.2 527.7,743.7 525.9,747.3 524.1,750.9 522.4,754.5 520.7,758.1 519.0,761.8 517.4,765.5 515.8,769.1 514.3,772.8 512.8,776.5 511.3,780.3 509.9,784.0 508.5,787.8 507.2,791.6 505.9,795.4 504.6,799.2 503.4,803.0 502.2,806.8 501.1,810.7 500.0,814.5 498.9,818.4 497.9,822.3 497.0,826.2 496.0,830.1 495.2,834.0 494.3,837.9 493.5,841.8 492.8,845.7 492.0,849.7 491.4,853.6 490.7,857.6 490.2,861.6 489.6,865.5 489.1,869.5 488.7,873.5 488.3,877.5 487.9,881.5 487.6,885.5 487.3,889.5 487.0,893.5 486.8,897.5 486.7,901.5 486.6,905.5 486.5,909.5 486.5,913.5"/>
<path d="M856.5,543.5 852.5,543.5 848.5,543.3 844.5,543.1 840.5,542.8 836.5,542.4 832.5,541.9 828.5,541.4 824.5,540.7 820.6,540.0 816.7,539.2 812.7,538.3 808.8,537.3 805.0,536.2 801.1,535.0 797.3,533.8 793.5,532.5 789.8,531.0 786.0,529.6 782.3,528.0 778.7,526.3 775.1,524.6 771.5,522.8 767.9,520.9 764.4,519.0 761.0,516.9 757.5,514.8 754.2,512.6 750.8,510.4 747.6,508.0 744.4,505.6 741.2,503.2 738.1,500.6 735.0,498.0 732.0,495.4 729.1,492.6 726.2,489.8 723.4,487.0 720.6,484.0 717.9,481.1 715.3,478.0 712.7,474.9 710.2,471.8 707.8,468.6 705.5,465.3 703.2,462.0 701.0,458.7 698.8,455.3 696.8,451.8 694.8,448.3 692.9,444.8 691.0,441.2 689.3,437.6 687.6,434.0 686.0,430.3 684.5,426.6 683.0,422.8 681.7,419.0 680.4,415.2 679.2,411.4 678.1,407.5 677.1,403.7 676.2,399.7 675.3,395.8 674.5,391.9 673.9,387.9 673.3,384.0 672.7,380.0 672.3,376.0 672.0,372.0 671.7,368.0 671.6,364.0 671.5,359.9 671.5,355.9 671.6,351.9 671.8,347.9 672.1,343.9 672.4,339.9 672.9,335.9 673.4,331.9 674.0,327.9 674.7,324.0 675.5,320.1 676.4,316.1 677.4,312.2 678.4,308.4 679.6,304.5 680.8,300.7 682.1,296.9 683.4,293.1 684.9,289.4 686.4,285.7 688.1,282.0 689.8,278.3 691.5,274.7 693.4,271.2 695.3,267.7 697.3,264.2 699.4,260.8 701.6,257.4 703.8,254.0 706.1,250.7 708.5,247.5"/>
<path d="M856.5,543.5 852.5,543.5 848.5,543.7 844.5,543.9 840.5,544.2 836.5,544.6 832.5,545.1 828.5,545.6 824.5,546.3 820.6,547.0 816.7,547.8 812.7,548.7 808.8,549.7 805.0,550.8 801.1,552.0 797.3,553.2 793.5,554.5 789.8,556.0 786.0,557.4 782.3,559.0 778.7,560.7 775.1,562.4 771.5,564.2 767.9,566.1 764.4,568.0 761.0,570.1 757.5,572.2 754.2,574.4 750.8,576.6 747.6,579.0 744.4,581.4 741.2,583.8 738.1,586.4 735.0,589.0 732.0,591.6 729.1,594.4 726.2,597.2 723.4,600.0 720.6,603.0 717.9,605.9 715.3,609.0 712.7,612.1 710.2,615.2 707.8,618.4 705.5,621.7 703.2,625.0 701.0,628.3 698.8,631.7 696.8,635.2 694.8,638.7 692.9,642.2 691.0,645.8 689.3,649.4 687.6,653.0 686.0,656.7 684.5,660.4 683.0,664.2 681.7,668.0 680.4,671.8 679.2,675.6 678.1,679.5 677.1,683.3 676.2,687.3 675.3,691.2 674.5,695.1 673.9,699.1 673.3,703.0 672.7,707.0 672.3,711.0 672.0,715.0 671.7,719.0 671.6,723.0 671.5,727.1 671.5,731.1 671.6,735.1 671.8,739.1 672.1,743.1 672.4,747.1 672.9,751.1 673.4,755.1 674.0,759.1 674.7,763.0 675.5,766.9 676.4,770.9 677.4,774.8 678.4,778.6 679.6,782.5 680.8,786.3 682.1,790.1 683.4,793.9 684.9,797.6 686.4,801.3 688.1,805.0 689.8,808.7 691.5,812.3 693.4,815.8 695.3,819.3 697.3,822.8 699.4,826.2 701.6,829.6 703.8,833.0 706.1,836.3 708.5,839.5"/>
<path d="M856.5,543.5 852.5,543.4 848.5,543.2 844.5,542.7 840.5,542.1 836.6,541.3 832.6,540.4 828.8,539.3 825.0,538.0 821.2,536.5 817.5,534.9 813.9,533.1 810.4,531.2 807.0,529.1 803.6,526.9 800.4,524.5 797.2,522.0 794.2,519.4 791.3,516.6 788.5,513.7 785.8,510.7 783.3,507.6 780.9,504.3 778.7,501.0 776.6,497.6 774.6,494.0 772.8,490.4 771.2,486.8 769.7,483.0 768.4,479.2 767.3,475.4 766.3,471.5 765.5,467.5 764.9,463.6 764.4,459.6 764.1,455.6 764.0,451.5 764.1,447.5 764.3,443.5 764.7,439.5 765.3,435.5 766.1,431.6 767.0,427.7 768.1,423.8 769.4,420.0 770.8,416.2 772.4,412.5 774.1,408.9 776.0,405.4 778.1,401.9 780.3,398.6 782.6,395.3 785.1,392.1 787.8,389.1 790.5,386.2 793.4,383.4 796.4,380.7 799.5,378.1 802.7,375.7 806.0,373.5 809.5,371.4 813.0,369.4"/>
<path d="M856.5,543.5 852.5,543.6 848.5,543.8 844.5,544.3 840.5,544.9 836.6,545.7 832.6,546.6 828.8,547.7 825.0,549.0 821.2,550.5 817.5,552.1 813.9,553.9 810.4,555.8 807.0,557.9 803.6,560.1 800.4,562.5 797.2,565.0 794.2,567.6 791.3,570.4 788.5,573.3 785.8,576.3 783.3,579.4 780.9,582.7 778.7,586.0 776.6,589.4 774.6,593.0 772.8,596.6 771.2,600.2 769.7,604.0 768.4,607.8 767.3,611.6 766.3,615.5 765.5,619.5 764.9,623.4 764.4,627.4 764.1,631.4 764.0,635.5 764.1,639.5 764.3,643.5 764.7,647.5 765.3,651.5 766.1,655.4 767.0,659.3 768.1,663.2 769.4,667.0 770.8,670.8 772.4,674.5 774.1,678.1 776.0,681.6 778.1,685.1 780.3,688.4 782.6,691.7 785.1,694.9 787.8,697.9 790.5,700.8 793.4,703.6 796.4,706.3 799.5,708.9 802.7,711.3 806.0,713.5 809.5,715.6 813.0,717.6"/>
<path d="M856.5,543.5 852.5,543.3 848.5,542.6 844.6,541.5 840.9,540.0 837.3,538.1 834.0,535.9 830.9,533.2 828.2,530.3 825.8,527.1 823.7,523.6 822.0,520.0 820.8,516.1 819.9,512.2 819.5,508.2 819.6,504.1 820.1,500.1 821.0,496.2 822.3,492.4 824.0,488.8 826.1,485.3 828.6,482.2 831.4,479.3 834.5,476.7 837.9,474.5 841.5,472.7 845.3,471.2 849.2,470.2"/>
<path d="M856.5,543.5 852.5,543.7 848.5,544.4 844.6,545.5 840.9,547.0 837.3,548.9 834.0,551.1 830.9,553.8 828.2,556.7 825.8,559.9 823.7,563.4 822.0,567.0 820.8,570.9 819.9,574.8 819.5,578.8 819.6,582.9 820.1,586.9 821.0,590.8 822.3,594.6 824.0,598.2 826.1,601.7 828.6,604.8 831.4,607.7 834.5,610.3 837.9,612.5 841.5,614.3 845.3,615.8 849.2,616.8"/>
</g>
<g fill="none" stroke="#0a84ff" stroke-width="1.1">
<circle cx="424.83" cy="543.50" r="308.33"/>
<circle cx="363.17" cy="543.50" r="246.67"/>
<circle cx="301.50" cy="543.50" r="185.00" stroke-width="2.2"/>
<circle cx="239.83" cy="543.50" r="123.33"/>
<circle cx="190.50" cy="543.50" r="74.00"/>
<circle cx="150.14" cy="543.50" r="33.64"/>
</g>
<g font-family="Liberation Sans" font-size="16">
<rect x="424.8" y="226.2" width="65.0" height="21.0" fill="#fff"/>
<text x="428.3" y="241.5" fill="#0a84ff" text-anchor="start">4.0m</text>
<rect x="363.2" y="287.8" width="53.0" height="21.0" fill="#fff"/>
<text x="366.7" y="303.1" fill="#0a84ff" text-anchor="start">10.0</text>
<rect x="301.5" y="349.5" width="53.0" height="21.0" fill="#fff"/>
<text x="305.0" y="364.8" fill="#0a84ff" text-anchor="start">20.0</text>
<rect x="239.8" y="411.2" width="53.0" height="21.0" fill="#fff"/>
<text x="243.3" y="426.5" fill="#0a84ff" text-anchor="start">40.0</text>
<rect x="190.5" y="460.5" width="53.0" height="21.0" fill="#fff"/>
<text x="194.0" y="475.8" fill="#0a84ff" text-anchor="start">80.0</text>
<rect x="150.1" y="500.9" width="40.0" height="21.0" fill="#fff"/>
<text x="153.6" y="516.2" fill="#0a84ff" text-anchor="start">200</text>
<text x="840.0" y="695.0" fill="#0a84ff" text-anchor="start">4.0m</text>
<text x="722.0" y="859.0" fill="#0a84ff" text-anchor="start">10.0</text>
<text x="473.0" y="936.0" fill="#0a84ff" text-anchor="start">20.0</text>
<text x="224.0" y="858.0" fill="#0a84ff" text-anchor="start">40.0</text>
<text x="120.0" y="736.0" fill="#0a84ff" text-anchor="start">80.0</text>
<text x="77.0" y="625.0" fill="#0a84ff" text-anchor="start">200.0m</text>
</g>
<g fill="none" stroke="#0a84ff" stroke-width="1.1">
<path d="M116.5,543.5 120.5,543.5 124.5,543.5 128.5,543.5 132.6,543.6 136.6,543.6 140.6,543.7 144.6,543.7 148.6,543.8 152.6,543.9 156.6,543.9 160.6,544.0 164.7,544.1 168.7,544.2 172.7,544.4 176.7,544.5 180.7,544.6 184.7,544.8 188.7,544.9 192.7,545.1 196.7,545.2 200.7,545.4 204.8,545.6 208.8,545.8 212.8,546.0 216.8,546.2 220.8,546.4 224.8,546.7 228.8,546.9 232.8,547.2 236.8,547.4 240.8,547.7 244.8,548.0 248.8,548.2 252.8,548.5 256.8,548.8 260.8,549.1 264.8,549.5 268.8,549.8 272.8,550.1 276.8,550.5 280.8,550.8 284.8,551.2 288.8,551.5 292.8,551.9 296.8,552.3 300.8,552.7 304.8,553.1 308.8,553.5 312.8,553.9 316.8,554.4 320.7,554.8 324.7,555.3 328.7,555.7 332.7,556.2 336.7,556.7 340.7,557.1 344.7,557.6 348.6,558.1 352.6,558.6 356.6,559.1 360.6,559.7 364.6,560.2 368.5,560.7 372.5,561.3 376.5,561.9 380.5,562.4 384.4,563.0 388.4,563.6 392.4,564.2 396.3,564.8 400.3,565.4 404.3,566.0 408.2,566.6 412.2,567.3 416.1,567.9 420.1,568.6 424.1,569.2 428.0,569.9 432.0,570.6 435.9,571.3 439.9,572.0 443.8,572.7 447.8,573.4 451.7,574.1 455.7,574.9 459.6,575.6 463.6,576.3 467.5,577.1 471.4,577.9 475.4,578.6 479.3,579.4 483.2,580.2 487.2,581.0 491.1,581.8 495.0,582.6 499.0,583.5 502.9,584.3 506.8,585.1 510.7,586.0 514.7,586.9 518.6,587.7 522.5,588.6 526.4,589.5 530.3,590.4 534.2,591.3 538.1,592.2 542.0,593.1 545.9,594.0 549.9,595.0 553.8,595.9 557.6,596.9 561.5,597.8 565.4,598.8 569.3,599.8 573.2,600.8 577.1,601.8 581.0,602.8 584.9,603.8 588.8,604.8 592.6,605.8 596.5,606.9 600.4,607.9 604.3,609.0 608.1,610.0 612.0,611.1 615.9,612.2 619.7,613.3 623.6,614.4 627.4,615.5 631.3,616.6 635.2,617.7 639.0,618.8 642.9,620.0 646.7,621.1 650.5,622.3 654.4,623.4 658.2,624.6 662.1,625.8 665.9,627.0 669.7,628.2 673.6,629.4 677.4,630.6 681.2,631.8 685.0,633.0 688.8,634.3 692.7,635.5 696.5,636.8 700.3,638.0 704.1,639.3 707.9,640.6 711.7,641.9 715.5,643.2 719.3,644.5 723.1,645.8 726.9,647.1 730.6,648.4 734.4,649.8 738.2,651.1 742.0,652.4 745.8,653.8 749.5,655.2 753.3,656.6 757.1,657.9 760.8,659.3 764.6,660.7 768.4,662.1 772.1,663.6 775.9,665.0 779.6,666.4 783.4,667.9 787.1,669.3 790.8,670.8 794.6,672.2 798.3,673.7 802.0,675.2 805.8,676.7 809.5,678.2 813.2,679.7 816.9,681.2 820.6,682.7 824.3,684.3 828.0,685.8"/>
<path d="M116.5,543.5 120.5,543.5 124.5,543.5 128.5,543.5 132.6,543.4 136.6,543.4 140.6,543.3 144.6,543.3 148.6,543.2 152.6,543.1 156.6,543.1 160.6,543.0 164.7,542.9 168.7,542.8 172.7,542.6 176.7,542.5 180.7,542.4 184.7,542.2 188.7,542.1 192.7,541.9 196.7,541.8 200.7,541.6 204.8,541.4 208.8,541.2 212.8,541.0 216.8,540.8 220.8,540.6 224.8,540.3 228.8,540.1 232.8,539.8 236.8,539.6 240.8,539.3 244.8,539.0 248.8,538.8 252.8,538.5 256.8,538.2 260.8,537.9 264.8,537.5 268.8,537.2 272.8,536.9 276.8,536.5 280.8,536.2 284.8,535.8 288.8,535.5 292.8,535.1 296.8,534.7 300.8,534.3 304.8,533.9 308.8,533.5 312.8,533.1 316.8,532.6 320.7,532.2 324.7,531.7 328.7,531.3 332.7,530.8 336.7,530.3 340.7,529.9 344.7,529.4 348.6,528.9 352.6,528.4 356.6,527.9 360.6,527.3 364.6,526.8 368.5,526.3 372.5,525.7 376.5,525.1 380.5,524.6 384.4,524.0 388.4,523.4 392.4,522.8 396.3,522.2 400.3,521.6 404.3,521.0 408.2,520.4 412.2,519.7 416.1,519.1 420.1,518.4 424.1,517.8 428.0,517.1 432.0,516.4 435.9,515.7 439.9,515.0 443.8,514.3 447.8,513.6 451.7,512.9 455.7,512.1 459.6,511.4 463.6,510.7 467.5,509.9 471.4,509.1 475.4,508.4 479.3,507.6 483.2,506.8 487.2,506.0 491.1,505.2 495.0,504.4 499.0,503.5 502.9,502.7 506.8,501.9 510.7,501.0 514.7,500.1 518.6,499.3 522.5,498.4 526.4,497.5 530.3,496.6 534.2,495.7 538.1,494.8 542.0,493.9 545.9,493.0 549.9,492.0 553.8,491.1 557.6,490.1 561.5,489.2 565.4,488.2 569.3,487.2 573.2,486.2 577.1,485.2 581.0,484.2 584.9,483.2 588.8,482.2 592.6,481.2 596.5,480.1 600.4,479.1 604.3,478.0 608.1,477.0 612.0,475.9 615.9,474.8 619.7,473.7 623.6,472.6 627.4,471.5 631.3,470.4 635.2,469.3 639.0,468.2 642.9,467.0 646.7,465.9 650.5,464.7 654.4,463.6 658.2,462.4 662.1,461.2 665.9,460.0 669.7,458.8 673.6,457.6 677.4,456.4 681.2,455.2 685.0,454.0 688.8,452.7 692.7,451.5 696.5,450.2 700.3,449.0 704.1,447.7 707.9,446.4 711.7,445.1 715.5,443.8 719.3,442.5 723.1,441.2 726.9,439.9 730.6,438.6 734.4,437.2 738.2,435.9 742.0,434.6 745.8,433.2 749.5,431.8 753.3,430.4 757.1,429.1 760.8,427.7 764.6,426.3 768.4,424.9 772.1,423.4 775.9,422.0 779.6,420.6 783.4,419.1 787.1,417.7 790.8,416.2 794.6,414.8 798.3,413.3 802.0,411.8 805.8,410.3 809.5,408.8 813.2,407.3 816.9,405.8 820.6,404.3 824.3,402.7 828.0,401.2"/>
<path d="M116.5,543.5 120.5,543.5 124.5,543.5 128.5,543.6 132.6,543.7 136.6,543.8 140.6,543.9 144.6,544.0 148.6,544.2 152.6,544.4 156.6,544.6 160.6,544.8 164.6,545.1 168.6,545.3 172.6,545.6 176.6,545.9 180.6,546.3 184.6,546.6 188.6,547.0 192.6,547.4 196.6,547.8 200.6,548.3 204.6,548.8 208.6,549.2 212.5,549.8 216.5,550.3 220.5,550.8 224.5,551.4 228.4,552.0 232.4,552.6 236.4,553.3 240.3,553.9 244.3,554.6 248.2,555.3 252.2,556.0 256.1,556.8 260.0,557.6 264.0,558.3 267.9,559.2 271.8,560.0 275.8,560.8 279.7,561.7 283.6,562.6 287.5,563.5 291.4,564.5 295.3,565.4 299.2,566.4 303.1,567.4 306.9,568.4 310.8,569.5 314.7,570.5 318.6,571.6 322.4,572.7 326.3,573.9 330.1,575.0 333.9,576.2 337.8,577.4 341.6,578.6 345.4,579.8 349.2,581.1 353.0,582.3 356.8,583.6 360.6,584.9 364.4,586.3 368.2,587.6 372.0,589.0 375.7,590.4 379.5,591.8 383.2,593.2 387.0,594.7 390.7,596.2 394.4,597.7 398.1,599.2 401.8,600.7 405.5,602.3 409.2,603.9 412.9,605.5 416.6,607.1 420.3,608.7 423.9,610.4 427.6,612.0 431.2,613.7 434.8,615.5 438.4,617.2 442.0,619.0 445.6,620.7 449.2,622.5 452.8,624.3 456.4,626.2 459.9,628.0 463.5,629.9 467.0,631.8 470.6,633.7 474.1,635.6 477.6,637.6 481.1,639.5 484.6,641.5 488.0,643.5 491.5,645.6 495.0,647.6 498.4,649.7 501.8,651.7 505.3,653.8 508.7,656.0 512.1,658.1 515.4,660.3 518.8,662.4 522.2,664.6 525.5,666.8 528.9,669.1 532.2,671.3 535.5,673.6 538.8,675.8 542.1,678.1 545.4,680.5 548.6,682.8 551.9,685.1 555.1,687.5 558.4,689.9 561.6,692.3 564.8,694.7 568.0,697.2 571.1,699.6 574.3,702.1 577.4,704.6 580.6,707.1 583.7,709.6 586.8,712.2 589.9,714.7 593.0,717.3 596.0,719.9 599.1,722.5 602.1,725.1 605.1,727.8 608.1,730.4 611.1,733.1 614.1,735.8 617.1,738.5 620.0,741.2 622.9,744.0 625.9,746.7 628.8,749.5 631.7,752.3 634.5,755.1 637.4,757.9 640.2,760.7 643.1,763.6 645.9,766.4 648.7,769.3 651.4,772.2 654.2,775.1 657.0,778.0 659.7,781.0 662.4,783.9 665.1,786.9 667.8,789.9 670.5,792.9 673.1,795.9 675.8,798.9 678.4,801.9 681.0,805.0 683.6,808.1 686.1,811.1 688.7,814.2 691.2,817.4 693.7,820.5 696.2,823.6 698.7,826.8 701.2,829.9 703.6,833.1 706.1,836.3 708.5,839.5"/>
<path d="M116.5,543.5 120.5,543.5 124.5,543.5 128.5,543.4 132.6,543.3 136.6,543.2 140.6,543.1 144.6,543.0 148.6,542.8 152.6,542.6 156.6,542.4 160.6,542.2 164.6,541.9 168.6,541.7 172.6,541.4 176.6,541.1 180.6,540.7 184.6,540.4 188.6,540.0 192.6,539.6 196.6,539.2 200.6,538.7 204.6,538.2 208.6,537.8 212.5,537.2 216.5,536.7 220.5,536.2 224.5,535.6 228.4,535.0 232.4,534.4 236.4,533.7 240.3,533.1 244.3,532.4 248.2,531.7 252.2,531.0 256.1,530.2 260.0,529.4 264.0,528.7 267.9,527.8 271.8,527.0 275.8,526.2 279.7,525.3 283.6,524.4 287.5,523.5 291.4,522.5 295.3,521.6 299.2,520.6 303.1,519.6 306.9,518.6 310.8,517.5 314.7,516.5 318.6,515.4 322.4,514.3 326.3,513.1 330.1,512.0 333.9,510.8 337.8,509.6 341.6,508.4 345.4,507.2 349.2,505.9 353.0,504.7 356.8,503.4 360.6,502.1 364.4,500.7 368.2,499.4 372.0,498.0 375.7,496.6 379.5,495.2 383.2,493.8 387.0,492.3 390.7,490.8 394.4,489.3 398.1,487.8 401.8,486.3 405.5,484.7 409.2,483.1 412.9,481.5 416.6,479.9 420.3,478.3 423.9,476.6 427.6,475.0 431.2,473.3 434.8,471.5 438.4,469.8 442.0,468.0 445.6,466.3 449.2,464.5 452.8,462.7 456.4,460.8 459.9,459.0 463.5,457.1 467.0,455.2 470.6,453.3 474.1,451.4 477.6,449.4 481.1,447.5 484.6,445.5 488.0,443.5 491.5,441.4 495.0,439.4 498.4,437.3 501.8,435.3 505.3,433.2 508.7,431.0 512.1,428.9 515.4,426.7 518.8,424.6 522.2,422.4 525.5,420.2 528.9,417.9 532.2,415.7 535.5,413.4 538.8,411.2 542.1,408.9 545.4,406.5 548.6,404.2 551.9,401.9 555.1,399.5 558.4,397.1 561.6,394.7 564.8,392.3 568.0,389.8 571.1,387.4 574.3,384.9 577.4,382.4 580.6,379.9 583.7,377.4 586.8,374.8 589.9,372.3 593.0,369.7 596.0,367.1 599.1,364.5 602.1,361.9 605.1,359.2 608.1,356.6 611.1,353.9 614.1,351.2 617.1,348.5 620.0,345.8 622.9,343.0 625.9,340.3 628.8,337.5 631.7,334.7 634.5,331.9 637.4,329.1 640.2,326.3 643.1,323.4 645.9,320.6 648.7,317.7 651.4,314.8 654.2,311.9 657.0,309.0 659.7,306.0 662.4,303.1 665.1,300.1 667.8,297.1 670.5,294.1 673.1,291.1 675.8,288.1 678.4,285.1 681.0,282.0 683.6,278.9 686.1,275.9 688.7,272.8 691.2,269.6 693.7,266.5 696.2,263.4 698.7,260.2 701.2,257.1 703.6,253.9 706.1,250.7 708.5,247.5"/>
<path d="M116.5,543.5 120.5,543.5 124.5,543.6 128.5,543.7 132.5,543.8 136.5,544.0 140.5,544.3 144.5,544.6 148.5,544.9 152.5,545.3 156.5,545.7 160.5,546.1 164.5,546.6 168.4,547.2 172.4,547.7 176.4,548.4 180.3,549.0 184.3,549.8 188.2,550.5 192.1,551.3 196.0,552.2 199.9,553.0 203.8,554.0 207.7,554.9 211.6,555.9 215.5,557.0 219.3,558.1 223.2,559.2 227.0,560.4 230.8,561.6 234.6,562.9 238.4,564.2 242.2,565.5 246.0,566.9 249.7,568.3 253.5,569.8 257.2,571.3 260.9,572.8 264.5,574.4 268.2,576.0 271.9,577.7 275.5,579.4 279.1,581.1 282.7,582.9 286.3,584.7 289.8,586.6 293.3,588.5 296.9,590.4 300.3,592.4 303.8,594.4 307.3,596.5 310.7,598.5 314.1,600.7 317.5,602.8 320.8,605.0 324.1,607.3 327.4,609.5 330.7,611.8 334.0,614.2 337.2,616.5 340.4,618.9 343.6,621.4 346.7,623.9 349.9,626.4 353.0,628.9 356.0,631.5 359.1,634.1 362.1,636.8 365.1,639.4 368.0,642.1 370.9,644.9 373.8,647.7 376.7,650.5 379.5,653.3 382.3,656.2 385.1,659.1 387.9,662.0 390.6,664.9 393.2,667.9 395.9,670.9 398.5,674.0 401.1,677.0 403.6,680.1 406.1,683.3 408.6,686.4 411.1,689.6 413.5,692.8 415.8,696.0 418.2,699.3 420.5,702.6 422.7,705.9 425.0,709.2 427.2,712.5 429.3,715.9 431.5,719.3 433.5,722.7 435.6,726.2 437.6,729.7 439.6,733.1 441.5,736.7 443.4,740.2 445.3,743.7 447.1,747.3 448.9,750.9 450.6,754.5 452.3,758.1 454.0,761.8 455.6,765.5 457.2,769.1 458.7,772.8 460.2,776.5 461.7,780.3 463.1,784.0 464.5,787.8 465.8,791.6 467.1,795.4 468.4,799.2 469.6,803.0 470.8,806.8 471.9,810.7 473.0,814.5 474.1,818.4 475.1,822.3 476.0,826.2 477.0,830.1 477.8,834.0 478.7,837.9 479.5,841.8 480.2,845.7 481.0,849.7 481.6,853.6 482.3,857.6 482.8,861.6 483.4,865.5 483.9,869.5 484.3,873.5 484.7,877.5 485.1,881.5 485.4,885.5 485.7,889.5 486.0,893.5 486.2,897.5 486.3,901.5 486.4,905.5 486.5,909.5 486.5,913.5"/>
<path d="M116.5,543.5 120.5,543.5 124.5,543.4 128.5,543.3 132.5,543.2 136.5,543.0 140.5,542.7 144.5,542.4 148.5,542.1 152.5,541.7 156.5,541.3 160.5,540.9 164.5,540.4 168.4,539.8 172.4,539.3 176.4,538.6 180.3,538.0 184.3,537.2 188.2,536.5 192.1,535.7 196.0,534.8 199.9,534.0 203.8,533.0 207.7,532.1 211.6,531.1 215.5,530.0 219.3,528.9 223.2,527.8 227.0,526.6 230.8,525.4 234.6,524.1 238.4,522.8 242.2,521.5 246.0,520.1 249.7,518.7 253.5,517.2 257.2,515.7 260.9,514.2 264.5,512.6 268.2,511.0 271.9,509.3 275.5,507.6 279.1,505.9 282.7,504.1 286.3,502.3 289.8,500.4 293.3,498.5 296.9,496.6 300.3,494.6 303.8,492.6 307.3,490.5 310.7,488.5 314.1,486.3 317.5,484.2 320.8,482.0 324.1,479.7 327.4,477.5 330.7,475.2 334.0,472.8 337.2,470.5 340.4,468.1 343.6,465.6 346.7,463.1 349.9,460.6 353.0,458.1 356.0,455.5 359.1,452.9 362.1,450.2 365.1,447.6 368.0,444.9 370.9,442.1 373.8,439.3 376.7,436.5 379.5,433.7 382.3,430.8 385.1,427.9 387.9,425.0 390.6,422.1 393.2,419.1 395.9,416.1 398.5,413.0 401.1,410.0 403.6,406.9 406.1,403.7 408.6,400.6 411.1,397.4 413.5,394.2 415.8,391.0 418.2,387.7 420.5,384.4 422.7,381.1 425.0,377.8 427.2,374.5 429.3,371.1 431.5,367.7 433.5,364.3 435.6,360.8 437.6,357.3 439.6,353.9 441.5,350.3 443.4,346.8 445.3,343.3 447.1,339.7 448.9,336.1 450.6,332.5 452.3,328.9 454.0,325.2 455.6,321.5 457.2,317.9 458.7,314.2 460.2,310.5 461.7,306.7 463.1,303.0 464.5,299.2 465.8,295.4 467.1,291.6 468.4,287.8 469.6,284.0 470.8,280.2 471.9,276.3 473.0,272.5 474.1,268.6 475.1,264.7 476.0,260.8 477.0,256.9 477.8,253.0 478.7,249.1 479.5,245.2 480.2,241.3 481.0,237.3 481.6,233.4 482.3,229.4 482.8,225.4 483.4,221.5 483.9,217.5 484.3,213.5 484.7,209.5 485.1,205.5 485.4,201.5 485.7,197.5 486.0,193.5 486.2,189.5 486.3,185.5 486.4,181.5 486.5,177.5 486.5,173.5"/>
<path d="M116.5,543.5 120.5,543.5 124.5,543.7 128.5,543.9 132.5,544.2 136.5,544.6 140.5,545.1 144.5,545.6 148.5,546.3 152.4,547.0 156.3,547.8 160.3,548.7 164.2,549.7 168.0,550.8 171.9,552.0 175.7,553.2 179.5,554.5 183.2,556.0 187.0,557.4 190.7,559.0 194.3,560.7 197.9,562.4 201.5,564.2 205.1,566.1 208.6,568.0 212.0,570.1 215.5,572.2 218.8,574.4 222.2,576.6 225.4,579.0 228.6,581.4 231.8,583.8 234.9,586.4 238.0,589.0 241.0,591.6 243.9,594.4 246.8,597.2 249.6,600.0 252.4,603.0 255.1,605.9 257.7,609.0 260.3,612.1 262.8,615.2 265.2,618.4 267.5,621.7 269.8,625.0 272.0,628.3 274.2,631.7 276.2,635.2 278.2,638.7 280.1,642.2 282.0,645.8 283.7,649.4 285.4,653.0 287.0,656.7 288.5,660.4 290.0,664.2 291.3,668.0 292.6,671.8 293.8,675.6 294.9,679.5 295.9,683.3 296.8,687.3 297.7,691.2 298.5,695.1 299.1,699.1 299.7,703.0 300.3,707.0 300.7,711.0 301.0,715.0 301.3,719.0 301.4,723.0 301.5,727.1 301.5,731.1 301.4,735.1 301.2,739.1 300.9,743.1 300.6,747.1 300.1,751.1 299.6,755.1 299.0,759.1 298.3,763.0 297.5,766.9 296.6,770.9 295.6,774.8 294.6,778.6 293.4,782.5 292.2,786.3 290.9,790.1 289.6,793.9 288.1,797.6 286.6,801.3 284.9,805.0 283.2,808.7 281.5,812.3 279.6,815.8 277.7,819.3 275.7,822.8 273.6,826.2 271.4,829.6 269.2,833.0 266.9,836.3 264.5,839.5"/>
<path d="M116.5,543.5 120.5,543.5 124.5,543.3 128.5,543.1 132.5,542.8 136.5,542.4 140.5,541.9 144.5,541.4 148.5,540.7 152.4,540.0 156.3,539.2 160.3,538.3 164.2,537.3 168.0,536.2 171.9,535.0 175.7,533.8 179.5,532.5 183.2,531.0 187.0,529.6 190.7,528.0 194.3,526.3 197.9,524.6 201.5,522.8 205.1,520.9 208.6,519.0 212.0,516.9 215.5,514.8 218.8,512.6 222.2,510.4 225.4,508.0 228.6,505.6 231.8,503.2 234.9,500.6 238.0,498.0 241.0,495.4 243.9,492.6 246.8,489.8 249.6,487.0 252.4,484.0 255.1,481.1 257.7,478.0 260.3,474.9 262.8,471.8 265.2,468.6 267.5,465.3 269.8,462.0 272.0,458.7 274.2,455.3 276.2,451.8 278.2,448.3 280.1,444.8 282.0,441.2 283.7,437.6 285.4,434.0 287.0,430.3 288.5,426.6 290.0,422.8 291.3,419.0 292.6,415.2 293.8,411.4 294.9,407.5 295.9,403.7 296.8,399.7 297.7,395.8 298.5,391.9 299.1,387.9 299.7,384.0 300.3,380.0 300.7,376.0 301.0,372.0 301.3,368.0 301.4,364.0 301.5,359.9 301.5,355.9 301.4,351.9 301.2,347.9 300.9,343.9 300.6,339.9 300.1,335.9 299.6,331.9 299.0,327.9 298.3,324.0 297.5,320.1 296.6,316.1 295.6,312.2 294.6,308.4 293.4,304.5 292.2,300.7 290.9,296.9 289.6,293.1 288.1,289.4 286.6,285.7 284.9,282.0 283.2,278.3 281.5,274.7 279.6,271.2 277.7,267.7 275.7,264.2 273.6,260.8 271.4,257.4 269.2,254.0 266.9,250.7 264.5,247.5"/>
<path d="M116.5,543.5 120.5,543.6 124.5,543.8 128.5,544.3 132.5,544.9 136.4,545.7 140.4,546.6 144.2,547.7 148.0,549.0 151.8,550.5 155.5,552.1 159.1,553.9 162.6,555.8 166.0,557.9 169.4,560.1 172.6,562.5 175.8,565.0 178.8,567.6 181.7,570.4 184.5,573.3 187.2,576.3 189.7,579.4 192.1,582.7 194.3,586.0 196.4,589.4 198.4,593.0 200.2,596.6 201.8,600.2 203.3,604.0 204.6,607.8 205.7,611.6 206.7,615.5 207.5,619.5 208.1,623.4 208.6,627.4 208.9,631.4 209.0,635.5 208.9,639.5 208.7,643.5 208.3,647.5 207.7,651.5 206.9,655.4 206.0,659.3 204.9,663.2 203.6,667.0 202.2,670.8 200.6,674.5 198.9,678.1 197.0,681.6 194.9,685.1 192.7,688.4 190.4,691.7 187.9,694.9 185.2,697.9 182.5,700.8 179.6,703.6 176.6,706.3 173.5,708.9 170.3,711.3 167.0,713.5 163.5,715.6 160.0,717.6"/>
<path d="M116.5,543.5 120.5,543.4 124.5,543.2 128.5,542.7 132.5,542.1 136.4,541.3 140.4,540.4 144.2,539.3 148.0,538.0 151.8,536.5 155.5,534.9 159.1,533.1 162.6,531.2 166.0,529.1 169.4,526.9 172.6,524.5 175.8,522.0 178.8,519.4 181.7,516.6 184.5,513.7 187.2,510.7 189.7,507.6 192.1,504.3 194.3,501.0 196.4,497.6 198.4,494.0 200.2,490.4 201.8,486.8 203.3,483.0 204.6,479.2 205.7,475.4 206.7,471.5 207.5,467.5 208.1,463.6 208.6,459.6 208.9,455.6 209.0,451.5 208.9,447.5 208.7,443.5 208.3,439.5 207.7,435.5 206.9,431.6 206.0,427.7 204.9,423.8 203.6,420.0 202.2,416.2 200.6,412.5 198.9,408.9 197.0,405.4 194.9,401.9 192.7,398.6 190.4,395.3 187.9,392.1 185.2,389.1 182.5,386.2 179.6,383.4 176.6,380.7 173.5,378.1 170.3,375.7 167.0,373.5 163.5,371.4 160.0,369.4"/>
<path d="M116.5,543.5 120.5,543.7 124.5,544.4 128.4,545.5 132.1,547.0 135.7,548.9 139.0,551.1 142.1,553.8 144.8,556.7 147.2,559.9 149.3,563.4 151.0,567.0 152.2,570.9 153.1,574.8 153.5,578.8 153.4,582.9 152.9,586.9 152.0,590.8 150.7,594.6 149.0,598.2 146.9,601.7 144.4,604.8 141.6,607.7 138.5,610.3 135.1,612.5 131.5,614.3 127.7,615.8 123.8,616.8"/>
<path d="M116.5,543.5 120.5,543.3 124.5,542.6 128.4,541.5 132.1,540.0 135.7,538.1 139.0,535.9 142.1,533.2 144.8,530.3 147.2,527.1 149.3,523.6 151.0,520.0 152.2,516.1 153.1,512.2 153.5,508.2 153.4,504.1 152.9,500.1 152.0,496.2 150.7,492.4 149.0,488.8 146.9,485.3 144.4,482.2 141.6,479.3 138.5,476.7 135.1,474.5 131.5,472.7 127.7,471.2 123.8,470.2"/>
</g>
<g fill="none" stroke="#3a0a3a" stroke-width="2.4">
<path d="M486.5,543.5 L486.5,552 L846,543.5 L844.5,578"/>
</g>
<g fill="none" stroke="#000">
<rect x="481.5" y="538" width="10" height="10" stroke-width="3"/>
<rect x="484" y="550.5" width="6" height="5" stroke-width="2.5"/>
<rect x="842.5" y="540" width="6" height="6" stroke-width="2.5"/>
<rect x="841" y="575" width="6" height="6" stroke-width="2.5"/>
</g>
<g font-family="Liberation Sans" font-size="16" fill="#008000">
<text x="490" y="558">DP 1</text>
<rect x="488" y="555" width="40" height="15" fill="#fff"/>
<text x="489" y="567">TP 2</text>
<text x="851" y="558">TP 3</text>
<text x="849" y="593">TP 4</text>
</g>
</svg>
<div class="a" style="left:970px;top:106px;width:1px;height:847px;background:#8a8a8a"></div>
<div class="win" style="left:972px;top:105px;width:581px;height:415px"><div class="wt" style="left:12px;top:14px">Schematic</div></div><div class="wb" style="left:1413px;top:115px"><svg width="41" height="23"><rect x="12.5" y="10.5" width="17" height="5" rx="1.2" fill="#fafafa" stroke="#3c3c50" stroke-width="1"/></svg></div><div class="wb" style="left:1457px;top:115px"><svg width="41" height="23"><path d="M12.5,4.5h15v14h-15z M16.5,8.5v6h7v-6z" fill="#f4f4f4" fill-rule="evenodd" stroke="#3c3c50" stroke-width="1"/></svg></div><div class="wb wbc" style="left:1501px;top:115px"><svg width="41" height="23"><path d="M12.5,6 L15.5,3.5 L20.5,8 L25.5,3.5 L28.5,6 L24,11.5 L28.5,17 L25.5,19.5 L20.5,15 L15.5,19.5 L12.5,17 L17,11.5 Z" fill="#d9d9d9" stroke="#3c3c50" stroke-width="1.1" stroke-linejoin="round"/></svg></div><div class="a" style="left:981px;top:142px;width:562px;height:369px;background:#fff"></div><svg class="a" style="left:981px;top:142px" width="562" height="369" viewBox="981 142 562 369" fill="none" stroke="#000" stroke-width="1.3">
<path d="M989.5,189.5V176.5H1071.5M1091.5,176.5H1105.5M1135.5,176.5H1167.5V189.5"/>
<rect x="985.5" y="189.5" width="8" height="20"/><path d="M989.5,209.5V221.5M985,221.5h9"/>
<circle cx="1040.5" cy="176.5" r="1.7" fill="#000"/>
<path d="M1040.5,176.5V196.5M1033,196.5h15M1033,200.5h15M1040.5,200.5V220.5M1036,220.5h9"/>
<rect x="1071.5" y="172.5" width="20" height="8"/>
<rect x="1105.5" y="174.5" width="30" height="4"/>
<circle cx="1167.5" cy="199.5" r="10"/><path d="M1161,201c2,-6 5,-6 7,-2s5,4 6,-3M1161,205c2,-6 5,-6 7,-2s5,4 6,-3"/>
<path d="M1167.5,209.5V221.5M1160.5,221.5h14"/>
<path d="M1151.5,204.5V181.5H1143.5M1147,178l-3.5,3.5l3.5,3.5"/>
</svg>
<div class="rot" style="left:1010px;top:193px;font-size:11px;line-height:11px">Z<sub style="font-size:8px">L</sub></div>
<div class="rot" style="left:1157px;top:206px;font-size:11px;line-height:11px">Zin</div>
<div class="rot" style="left:1000px;top:236px;letter-spacing:0.15px">( 50.00+j0.00)&Omega;@7.1MHz</div>
<div class="rot" style="left:1050px;top:236px;letter-spacing:0px">22.0pF</div>
<div class="rot" style="left:1090px;top:236px">3.3k&Omega;</div>
<div class="rot" style="left:1140px;top:236px">50.0&Omega;|0dB/m|&lambda;=0.0078</div>
<div class="rot" style="left:1125px;top:236px">330.6mm(phys)|330.6mm(electr)</div>

<div class="win" style="left:972px;top:522px;width:581px;height:211px"><div class="wt" style="left:12px;top:14px">Datapoints</div></div><div class="wb" style="left:1413px;top:533px"><svg width="41" height="23"><rect x="12.5" y="10.5" width="17" height="5" rx="1.2" fill="#fafafa" stroke="#3c3c50" stroke-width="1"/></svg></div><div class="wb" style="left:1457px;top:533px"><svg width="41" height="23"><path d="M12.5,4.5h15v14h-15z M16.5,8.5v6h7v-6z" fill="#f4f4f4" fill-rule="evenodd" stroke="#3c3c50" stroke-width="1"/></svg></div><div class="wb wbc" style="left:1501px;top:533px"><svg width="41" height="23"><path d="M12.5,6 L15.5,3.5 L20.5,8 L25.5,3.5 L28.5,6 L24,11.5 L28.5,17 L25.5,19.5 L20.5,15 L15.5,19.5 L12.5,17 L17,11.5 Z" fill="#d9d9d9" stroke="#3c3c50" stroke-width="1.1" stroke-linejoin="round"/></svg></div><div class="a" style="left:981px;top:560px;width:563px;height:165px;background:#fff;border:1px solid #000"></div><div class="a" style="left:982px;top:561px;width:561px;height:21px;background:#f0f0f0;border-bottom:1px solid #a0a0a0"></div><div class="a" style="left:1048px;top:563px;width:1px;height:19px;background:#a0a0a0"></div><div class="a" style="left:1093px;top:563px;width:1px;height:19px;background:#a0a0a0"></div><div class="a" style="left:1246px;top:563px;width:1px;height:19px;background:#a0a0a0"></div><div class="a" style="left:1309px;top:563px;width:1px;height:19px;background:#a0a0a0"></div><div class="a" style="left:982px;top:582px;width:561px;height:21px;background:#0078d7"></div><div class="a" style="left:982px;top:603px;width:561px;height:1px;background:#a0a0a0"></div><div class="a" style="left:982px;top:625px;width:561px;height:1px;background:#a0a0a0"></div><div class="a" style="left:982px;top:647px;width:561px;height:1px;background:#a0a0a0"></div><div class="a" style="left:982px;top:669px;width:561px;height:1px;background:#a0a0a0"></div><div class="a" style="left:1048px;top:582px;width:1px;height:87px;background:#a0a0a0"></div><div class="a" style="left:1093px;top:582px;width:1px;height:87px;background:#a0a0a0"></div><div class="a" style="left:1246px;top:582px;width:1px;height:87px;background:#a0a0a0"></div><div class="a" style="left:1309px;top:582px;width:1px;height:87px;background:#a0a0a0"></div><div class="cell" style="left:989px;top:564px">Start DP</div><div class="cell" style="left:1055px;top:564px">Point</div><div class="cell" style="left:1100px;top:564px">Z</div><div class="cell" style="left:1253px;top:564px">Q</div><div class="cell" style="left:1316px;top:564px">Frequency</div><div class="cell" style="left:1052px;top:585px;color:#fff">DP 1</div><div class="cell" style="left:1097px;top:585px;color:#fff">(50.000 + j0.000) &Omega;</div><div class="cell" style="left:1250px;top:585px;color:#fff">Q=0.000</div><div class="cell" style="left:1313px;top:585px;color:#fff">7.074MHz</div><div class="cell" style="left:1052px;top:607px;color:#000">TP 2</div><div class="cell" style="left:1097px;top:607px;color:#000">(49.881 - j2.439) &Omega;</div><div class="cell" style="left:1250px;top:607px;color:#000">Q=0.049</div><div class="cell" style="left:1313px;top:607px;color:#000">7.074MHz</div><div class="cell" style="left:1052px;top:629px;color:#000">TP 3</div><div class="cell" style="left:1097px;top:629px;color:#000">(3349.881 - j2.439) &Omega;</div><div class="cell" style="left:1250px;top:629px;color:#000">Q=0.001</div><div class="cell" style="left:1313px;top:629px;color:#000">7.074MHz</div><div class="cell" style="left:1052px;top:651px;color:#000">TP 4</div><div class="cell" style="left:1097px;top:651px;color:#000">(284.492 - j932.626) &Omega;</div><div class="cell" style="left:1250px;top:651px;color:#000">Q=3.278</div><div class="cell" style="left:1313px;top:651px;color:#000">7.074MHz</div><svg class="a" style="left:1009px;top:586px" width="11" height="11"><rect x="0.5" y="0.5" width="10" height="10" fill="#fff" stroke="#8a8a8a"/><path d="M2.2,5.2 L4.5,7.8 L8.8,2.5" fill="none" stroke="#000" stroke-width="1.6"/></svg>
</body></html>
